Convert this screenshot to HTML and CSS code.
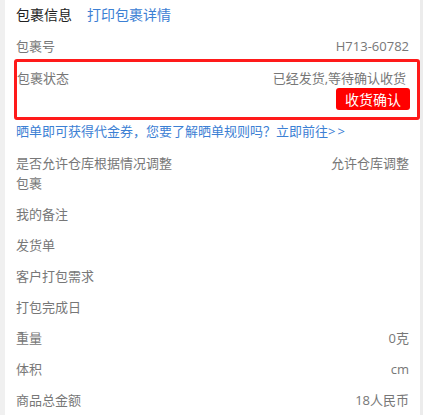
FILE: index.html
```html
<!DOCTYPE html>
<html lang="zh-CN">
<head>
<meta charset="utf-8">
<title>包裹信息</title>
<link rel="stylesheet" href="styles.css">
</head>
<body>
<div class="panel">
  <div class="header">
    <span class="title">包裹信息</span>
    <a class="print" href="#">打印包裹详情</a>
  </div>
  <div class="row first">
    <span class="label">包裹号</span>
    <span class="value">H713-60782</span>
  </div>
  <div class="status-box">
    <div class="status-line">
      <span class="label">包裹状态</span>
      <span class="value status-text">已经发货,等待确认收货</span>
    </div>
    <div class="btn-line">
      <button class="confirm">收货确认</button>
    </div>
  </div>
  <a class="promo" href="#">晒单即可获得代金券，您要了解晒单规则吗？立即前往<span class="arrows">&gt;&gt;</span></a>
  <div class="row">
    <span class="label narrow">是否允许仓库根据情况调整包裹</span>
    <span class="value">允许仓库调整</span>
  </div>
  <div class="row"><span class="label">我的备注</span><span class="value"></span></div>
  <div class="row"><span class="label">发货单</span><span class="value"></span></div>
  <div class="row"><span class="label">客户打包需求</span><span class="value"></span></div>
  <div class="row"><span class="label">打包完成日</span><span class="value"></span></div>
  <div class="row"><span class="label">重量</span><span class="value">0克</span></div>
  <div class="row"><span class="label">体积</span><span class="value">cm</span></div>
  <div class="row"><span class="label">商品总金额</span><span class="value">18人民币</span></div>
</div>
</body>
</html>
```

FILE: styles.css
```css
html, body {
  margin: 0;
  padding: 0;
  background: #ffffff;
}
body {
  font-family: "Open Sans", "Noto Sans CJK SC", "Noto Sans", sans-serif;
  font-size: 13px;
  color: #777777;
}
.panel {
  box-sizing: border-box;
  width: 423px;
  min-height: 415px;
  border-left: 5px solid #f0f0f0;
  border-right: 3px solid #ececec;
  padding: 0 11px 0 11px;
}
.header {
  height: 30px;
  display: flex;
  align-items: center;
  gap: 15px;
  font-size: 14px;
  line-height: 20px;
}
.title {
  color: #222222;
}
.print {
  color: #3c80d4;
  text-decoration: none;
}
.row {
  display: flex;
  justify-content: space-between;
  align-items: flex-start;
  padding: 5.5px 0;
  line-height: 20px;
}
.row.first {
  padding: 6px 0 3px;
}
.label {
  flex: 0 0 auto;
  color: #777777;
}
.label.narrow {
  max-width: 160px;
}
.value {
  color: #777777;
  text-align: right;
}
.status-box {
  margin: 0 -11px 0 -2px;
  border: 3px solid #ff1a1a;
  border-radius: 3px;
  padding: 7px 7px 7px 0;
}
.status-line {
  display: flex;
  justify-content: space-between;
  line-height: 18px;
}
.status-text {
  padding-right: 4px;
}
.btn-line {
  display: flex;
  justify-content: flex-end;
  margin-top: 1px;
}
.confirm {
  width: 74px;
  height: 22px;
  border: none;
  border-radius: 3px;
  background: #ff0000;
  color: #ffffff;
  font-family: "Noto Sans CJK SC", sans-serif;
  font-size: 14px;
  line-height: 22px;
  padding: 0;
}
.promo {
  display: block;
  margin-top: 1px;
  padding-bottom: 6px;
  line-height: 20px;
  color: #3c80d4;
  text-decoration: none;
}
.arrows {
  letter-spacing: 2px;
}
```
